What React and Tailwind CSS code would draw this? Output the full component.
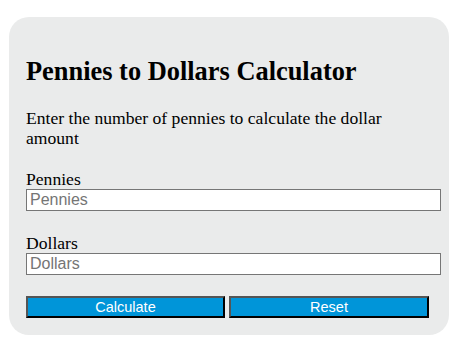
import React from 'react';

const serif = { fontFamily: '"Liberation Serif", "Times New Roman", serif' };
const sans = { fontFamily: '"Liberation Sans", Arial, sans-serif' };

export default function App() {
  return (
    <div className="w-[462px] h-[345px] bg-white pt-[17px] pl-[9px]">
      <div
        className="w-[440px] h-[318px] bg-[#eaebeb] rounded-[20px] pl-[17px] pr-[8px] pt-[39px] text-black"
        style={serif}
      >
        {/* Title */}
        <h2 className="text-[26.4px] leading-[30px] font-bold">Pennies to Dollars Calculator</h2>

        <p className="mt-[22px] w-[400px] text-[17.6px] leading-[20px]">
          Enter the number of pennies to calculate the dollar amount
        </p>

        {/* Inputs */}
        <div className="mt-[21px]">
          <label className="block text-[17.6px] leading-[20px]">Pennies</label>
          <input
            type="text"
            placeholder="Pennies"
            className="block w-[415px] h-[22px] bg-white border border-[#767676] px-[3px] text-[16px] placeholder-[#757575] outline-none"
            style={sans}
          />
        </div>

        <div className="mt-[22px]">
          <label className="block text-[17.6px] leading-[20px]">Dollars</label>
          <input
            type="text"
            placeholder="Dollars"
            className="block w-[415px] h-[22px] bg-white border border-[#767676] px-[3px] text-[16px] placeholder-[#757575] outline-none"
            style={sans}
          />
        </div>

        {/* Buttons */}
        <div className="mt-[21px] flex gap-[4px]" style={sans}>
          <button className="w-[199px] h-[22px] bg-[#0095d9] text-white text-[14.5px] leading-[18px] border-2 border-t-[#555] border-l-[#555] border-b-black border-r-black">
            Calculate
          </button>
          <button className="w-[200px] h-[22px] bg-[#0095d9] text-white text-[14.5px] leading-[18px] border-2 border-t-[#555] border-l-[#555] border-b-black border-r-black">
            Reset
          </button>
        </div>
      </div>
    </div>
  );
}
